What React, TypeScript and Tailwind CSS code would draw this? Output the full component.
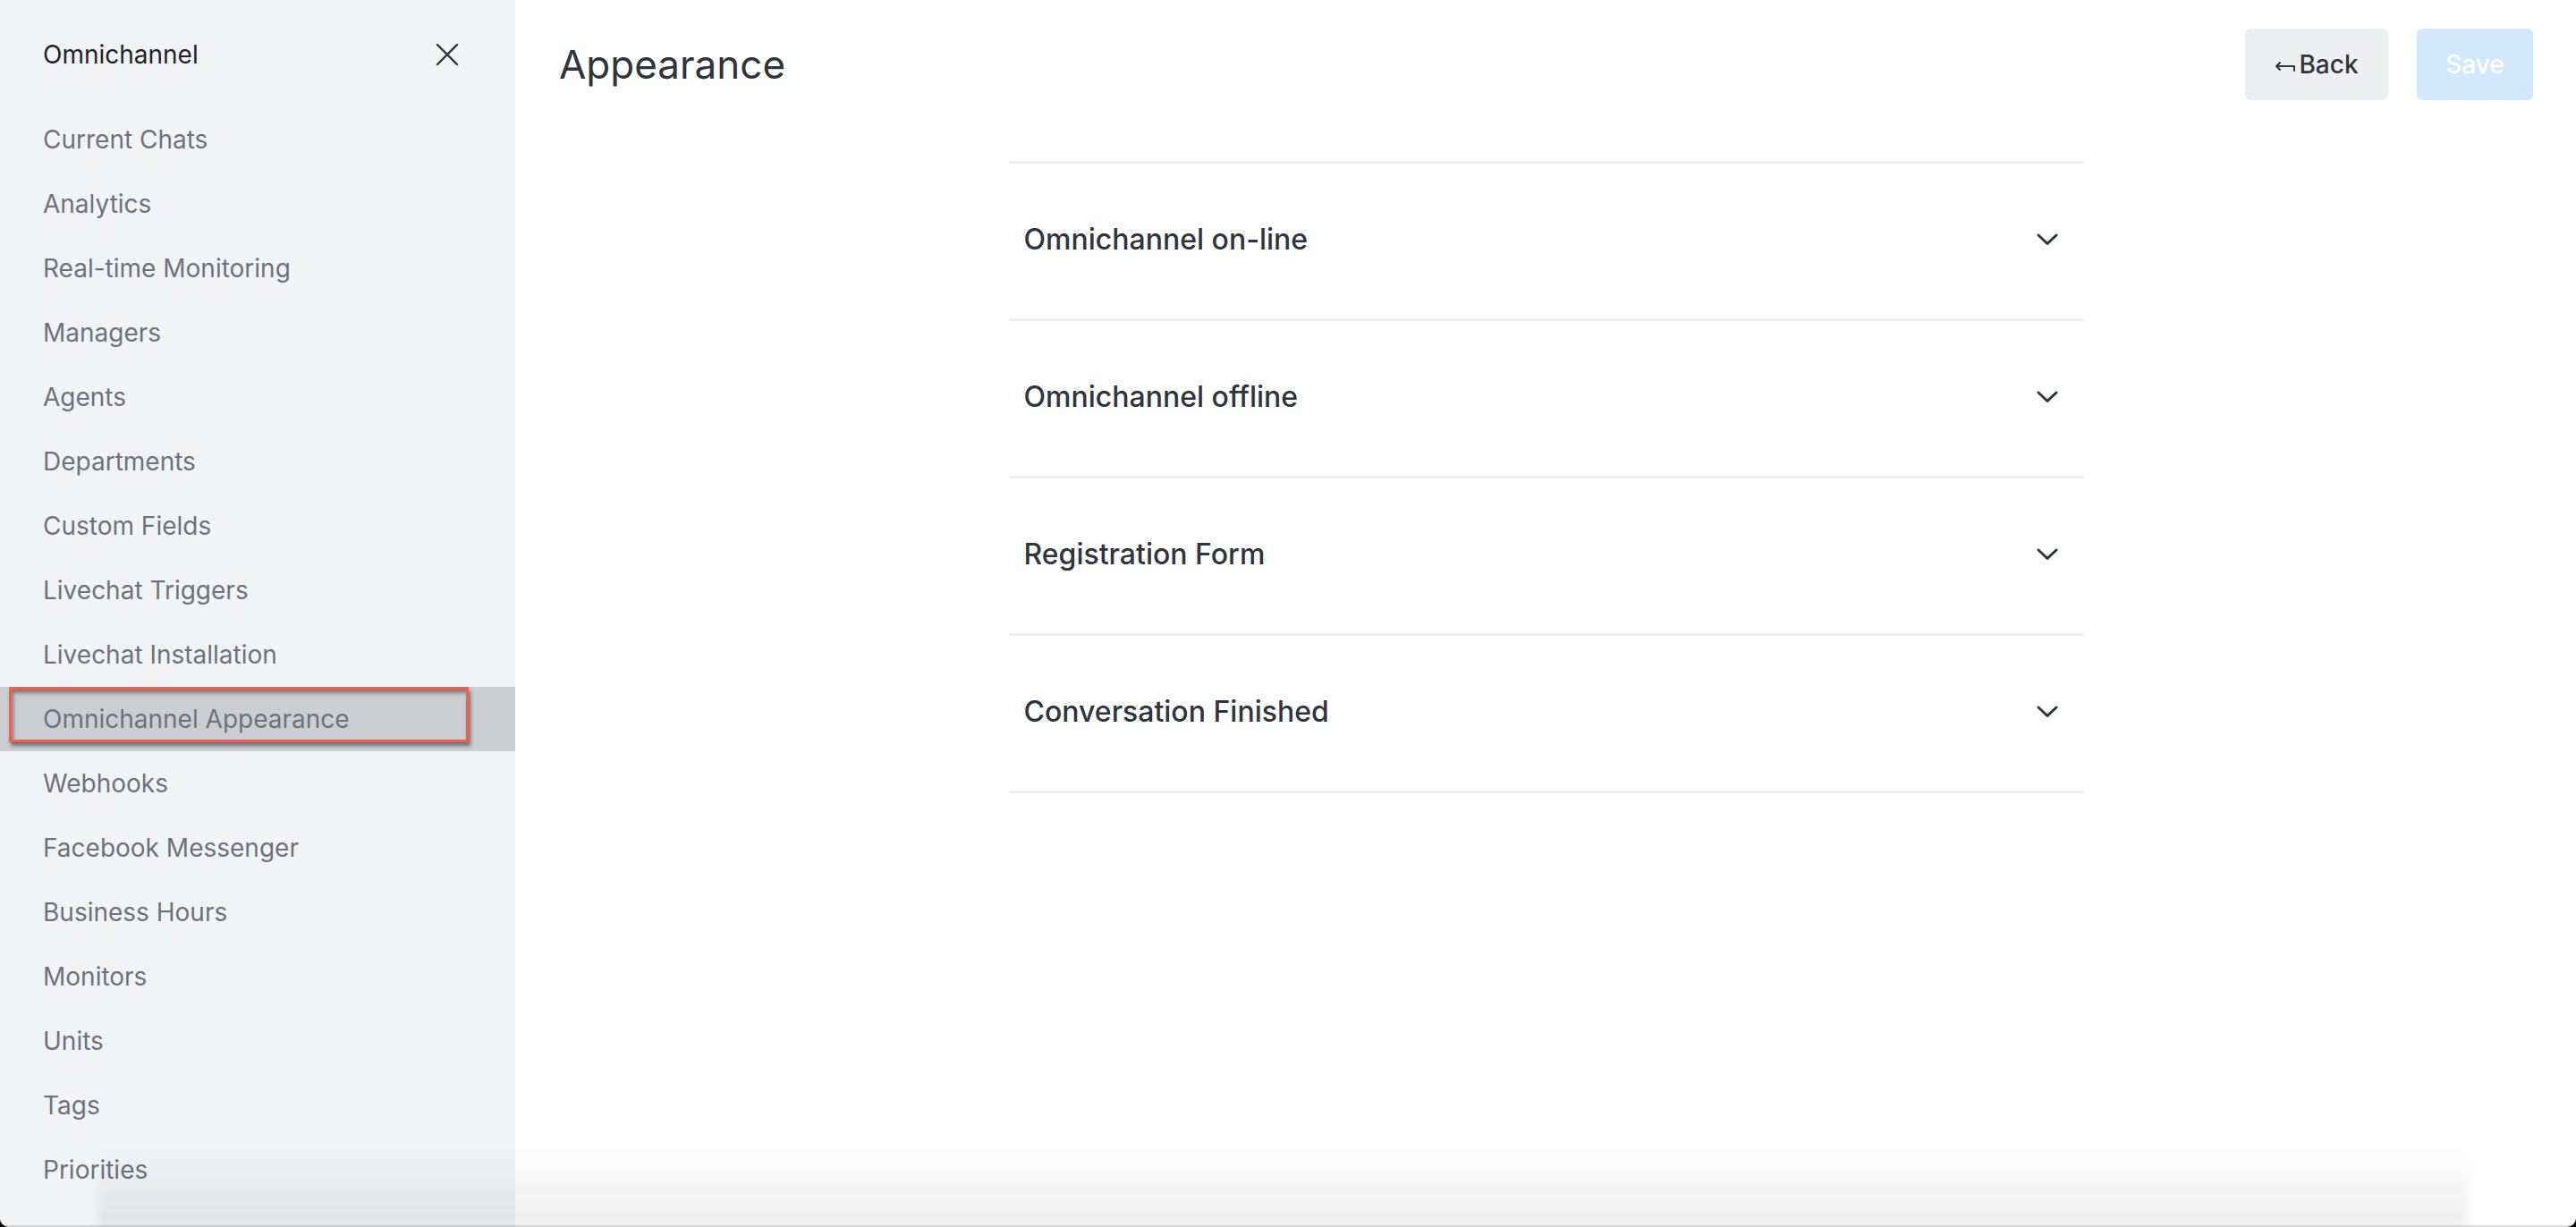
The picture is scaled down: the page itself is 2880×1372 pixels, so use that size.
import React from "react";

const items = [
  "Current Chats",
  "Analytics",
  "Real-time Monitoring",
  "Managers",
  "Agents",
  "Departments",
  "Custom Fields",
  "Livechat Triggers",
  "Livechat Installation",
  "Omnichannel Appearance",
  "Webhooks",
  "Facebook Messenger",
  "Business Hours",
  "Monitors",
  "Units",
  "Tags",
  "Priorities",
];

const sections = [
  "Omnichannel on-line",
  "Omnichannel offline",
  "Registration Form",
  "Conversation Finished",
];

function Chevron() {
  return (
    <svg width="24" height="14" viewBox="0 0 24 14" fill="none">
      <polyline
        points="2,2 12,11.5 22,2"
        stroke="#2f343d"
        strokeWidth="3"
        strokeLinecap="round"
        strokeLinejoin="round"
      />
    </svg>
  );
}

export default function App() {
  return (
    <div
      className="w-[2880px] h-[1372px] bg-black overflow-hidden"
      style={{ fontFamily: 'Inter, "Noto Sans", sans-serif' }}
    >
      <div className="relative flex h-full w-full rounded-b-[10px] overflow-hidden bg-white">
        <aside className="w-[576px] shrink-0 bg-[#f2f3f5] flex flex-col">
          <div className="h-[120px] pt-[43px] pl-[48px] pr-[62px] flex items-start justify-between">
            <span className="text-[28px] leading-[36px] text-[#1f2329]">Omnichannel</span>
            <div className="h-[36px] flex items-center">
              <svg width="28" height="28" viewBox="0 0 28 28" fill="none">
                <path d="M3 3 L25 25 M25 3 L3 25" stroke="#2f343d" strokeWidth="2.4" strokeLinecap="round" />
              </svg>
            </div>
          </div>
          <nav className="flex flex-col">
            {items.map((it) => {
              const selected = it === "Omnichannel Appearance";
              return (
                <div
                  key={it}
                  className={
                    "relative h-[72px] flex items-center pl-[48px] text-[28px] leading-[36px] text-[#6c737f] " +
                    (selected ? "bg-[#cbcdd1]" : "")
                  }
                >
                  {selected && (
                    <div className="absolute left-[10px] top-0 w-[514px] h-[62px] border-[3px] border-[#f75c4e] shadow-[2px_4px_4px_rgba(0,0,0,0.45),inset_2px_4px_4px_rgba(0,0,0,0.4)]" />
                  )}
                  <span className="relative">{it}</span>
                </div>
              );
            })}
          </nav>
        </aside>

        <main className="flex-1 flex flex-col">
          <div className="flex items-start justify-between pt-[32px] pl-[49px] pr-[48px]">
            <h1 className="text-[44px] leading-[80px] text-[#2f343d] font-normal">Appearance</h1>
            <div className="flex gap-[32px]">
              <button className="w-[160px] h-[80px] rounded-[6px] bg-[#eeeff1] flex items-center justify-center text-[28px] font-medium text-[#2f343d]">
                <svg width="24" height="16" viewBox="0 0 24 16" fill="none" className="mr-[3px] mt-[4px]">
                  <path d="M6 4 L2 8 L6 12 M2 8 H22 M22 8 V13" stroke="#2f343d" strokeWidth="2" strokeLinecap="round" strokeLinejoin="round" />
                </svg>
                Back
              </button>
              <button className="w-[130px] h-[80px] rounded-[6px] bg-[#d1e8fd] flex items-center justify-center text-[28px] font-medium text-white">
                Save
              </button>
            </div>
          </div>

          <div className="mt-[68px] w-[1201px] mx-auto flex flex-col border-b-[3px] border-[#eeeeee]">
            {sections.map((s) => (
              <div
                key={s}
                className="h-[176px] border-t-[3px] border-[#eeeeee] flex items-center justify-between pl-[17px] pr-[28px] pb-[4px]"
              >
                <span className="text-[32px] leading-[40px] font-medium text-[#2f343d]">{s}</span>
                <Chevron />
              </div>
            ))}
          </div>
        </main>

        <div className="pointer-events-none absolute bottom-0 left-[110px] right-[120px] h-[90px] bg-gradient-to-b from-transparent to-black/[0.07] blur-[6px]" />
        <div className="pointer-events-none absolute bottom-0 left-0 right-0 h-[2px] bg-black/[0.12]" />
      </div>
    </div>
  );
}
